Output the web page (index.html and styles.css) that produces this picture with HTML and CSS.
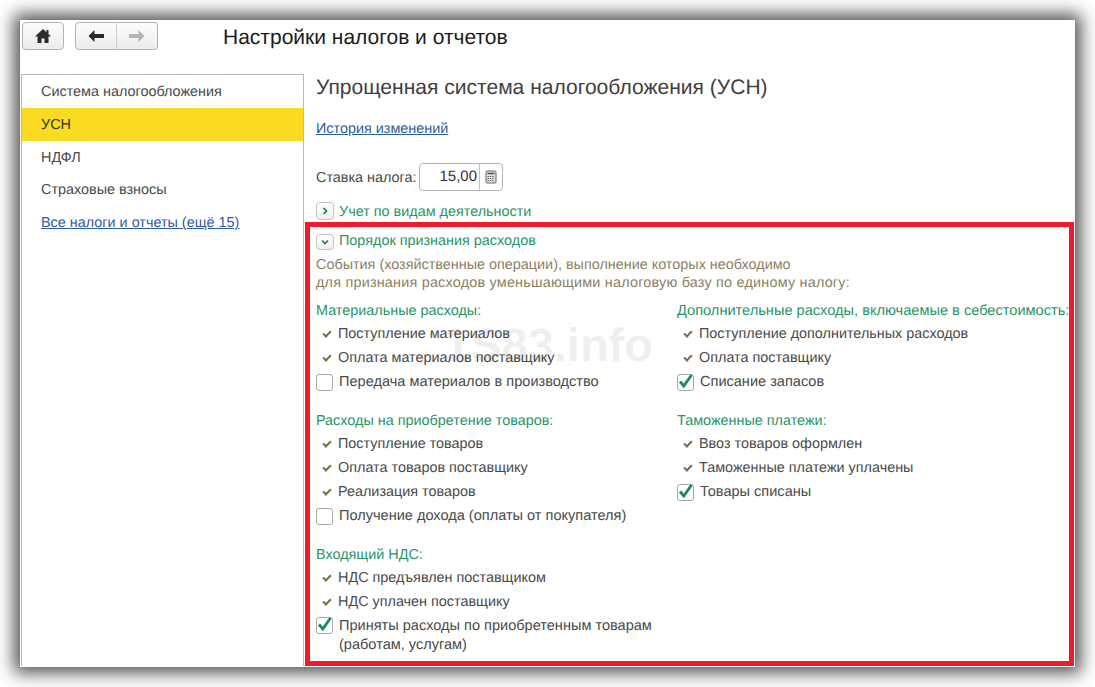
FILE: index.html
```html
<!DOCTYPE html>
<html lang="ru">
<head>
<meta charset="utf-8">
<title>Настройки налогов и отчетов</title>
<link rel="stylesheet" href="styles.css">
</head>
<body>
<div class="window">
  <header class="topbar">
    <button class="btn home" aria-label="Домой"><svg width="18" height="16" viewBox="0 0 18 16"><path d="M9 1 1 8.5h2.5V15h4v-4.5h3V15h4V8.5H17l-2.5-2.4V2h-2v2.2z" fill="#2b2b2b"/></svg></button>
    <div class="btn-group">
      <button class="btn nav" aria-label="Назад"><svg width="18" height="14" viewBox="0 0 18 14"><path d="M7.5 1 1.5 7l6 6V9H17V5H7.5z" fill="#2b2b2b"/></svg></button>
      <button class="btn nav" aria-label="Вперед"><svg width="18" height="14" viewBox="0 0 18 14"><path d="M10.5 1l6 6-6 6V9H1V5h9.5z" fill="#b5b5b5"/></svg></button>
    </div>
    <h1 class="page-title">Настройки налогов и отчетов</h1>
  </header>
  <div class="body">
    <nav class="sidebar">
      <div class="side-item">Система налогообложения</div>
      <div class="side-item active">УСН</div>
      <div class="side-item">НДФЛ</div>
      <div class="side-item">Страховые взносы</div>
      <div class="side-item"><a class="link" href="#">Все налоги и отчеты (ещё 15)</a></div>
    </nav>
    <main class="content">
      <div class="content-top">
        <h2 class="heading">Упрощенная система налогообложения (УСН)</h2>
        <a class="link history" href="#">История изменений</a>
        <div class="rate">
          <span class="rate-label">Ставка налога:</span>
          <div class="field">
            <span class="field-value">15,00</span>
            <span class="field-btn"><svg width="12" height="14" viewBox="0 0 12 14"><rect x="1" y="1" width="10" height="12" rx="1" fill="#e4e4e4" stroke="#666"/><path d="M2.5 3.5h7" stroke="#555" stroke-width="1.6"/><path d="M2.5 6.5h7M2.5 8.5h7M2.5 10.5h7" stroke="#666" stroke-dasharray="1.5 .8"/></svg></span>
          </div>
        </div>
        <div class="expander-row collapsed-row">
          <span class="expander"><svg width="8" height="8" viewBox="0 0 8 8"><path d="M2.5 1 5.5 4 2.5 7" fill="none" stroke="#1b7f56" stroke-width="1.7"/></svg></span>
          <span class="green">Учет по видам деятельности</span>
        </div>
      </div>
      <section class="highlight">
        <div class="expander-row">
          <span class="expander open"><svg width="8" height="8" viewBox="0 0 8 8"><path d="M1 2.5 4 5.5 7 2.5" fill="none" stroke="#1b7f56" stroke-width="1.7"/></svg></span>
          <span class="green">Порядок признания расходов</span>
        </div>
        <p class="desc">События (хозяйственные операции), выполнение которых необходимо<br><span class="desc-wide">для признания расходов уменьшающими налоговую базу по единому налогу:</span></p>
        <div class="columns">
          <div class="col">
            <div class="group">
              <div class="group-title">Материальные расходы:</div>
              <div class="item"><span class="tick"></span>Поступление материалов</div>
              <div class="item"><span class="tick"></span>Оплата материалов поставщику</div>
              <label class="check"><span class="box"></span>Передача материалов в производство</label>
            </div>
            <div class="group">
              <div class="group-title">Расходы на приобретение товаров:</div>
              <div class="item"><span class="tick"></span>Поступление товаров</div>
              <div class="item"><span class="tick"></span>Оплата товаров поставщику</div>
              <div class="item"><span class="tick"></span>Реализация товаров</div>
              <label class="check"><span class="box"></span>Получение дохода (оплаты от покупателя)</label>
            </div>
            <div class="group">
              <div class="group-title">Входящий НДС:</div>
              <div class="item"><span class="tick"></span>НДС предъявлен поставщиком</div>
              <div class="item"><span class="tick"></span>НДС уплачен поставщику</div>
              <label class="check multi"><span class="box on"><svg width="17" height="18" viewBox="0 0 17 18"><path d="M3 8.5 6.8 13 14.5 2" fill="none" stroke="#1b8a5a" stroke-width="2.8"/></svg></span><span>Приняты расходы по приобретенным товарам<br>(работам, услугам)</span></label>
            </div>
          </div>
          <div class="col">
            <div class="group">
              <div class="group-title nowrap">Дополнительные расходы, включаемые в себестоимость:</div>
              <div class="item"><span class="tick"></span>Поступление дополнительных расходов</div>
              <div class="item"><span class="tick"></span>Оплата поставщику</div>
              <label class="check"><span class="box on"><svg width="17" height="18" viewBox="0 0 17 18"><path d="M3 8.5 6.8 13 14.5 2" fill="none" stroke="#1b8a5a" stroke-width="2.8"/></svg></span>Списание запасов</label>
            </div>
            <div class="group">
              <div class="group-title">Таможенные платежи:</div>
              <div class="item"><span class="tick"></span>Ввоз товаров оформлен</div>
              <div class="item"><span class="tick"></span>Таможенные платежи уплачены</div>
              <label class="check"><span class="box on"><svg width="17" height="18" viewBox="0 0 17 18"><path d="M3 8.5 6.8 13 14.5 2" fill="none" stroke="#1b8a5a" stroke-width="2.8"/></svg></span>Товары списаны</label>
            </div>
          </div>
        </div>
        <div class="watermark">1S83.info</div>
      </section>
    </main>
  </div>
</div>
</body>
</html>
```

FILE: styles.css
```css
* { box-sizing: border-box; }
html, body { margin: 0; height: 100%; background: #fff; }
body {
  padding: 20px;
  font-family: "Liberation Sans", Arial, sans-serif;
  font-size: 14.4px;
  color: #4a4a4a;
  overflow: hidden;
  text-rendering: geometricPrecision;
}
.window {
  width: 1055px;
  height: 647px;
  background: #fff;
  box-shadow: 0 0 16px 6px rgba(0,0,0,.68);
  display: flex;
  flex-direction: column;
  overflow: hidden;
  border-right: 1px solid #fff;
  border-bottom: 1px solid #fff;
}
.topbar {
  height: 54px;
  flex: none;
  display: flex;
  align-items: flex-start;
  padding: 2px 0 0 2px;
}
.btn {
  border: 1px solid #b4b4b4;
  background: linear-gradient(#fdfdfd, #ececec);
  padding: 0;
  display: flex;
  align-items: center;
  justify-content: center;
  height: 28px;
}
.home { width: 42px; border-radius: 4px; }
.btn-group { display: flex; margin-left: 11px; border-radius: 4px; }
.nav { width: 42px; }
.nav:first-child { border-radius: 4px 0 0 4px; }
.nav:last-child { border-radius: 0 4px 4px 0; border-left: 1px solid #cfcfcf; margin-left: -1px; }
.page-title {
  margin: 3px 0 0 65px;
  font-size: 21px;
  font-weight: 400;
  color: #1c1c1c;
  line-height: 26px;
}
.body { flex: 1; display: flex; min-height: 0; }
.sidebar {
  width: 283px;
  flex: none;
  margin-left: 1px;
  border: 1px solid #b9b9b9;
  border-bottom: 0;
}
.side-item { height: 32.8px; line-height: 32.8px; padding: 1px 0 0 19px; }
.side-item.active { background: #fbdb22; color: #333; }
.link { color: #2f5c9c; text-decoration: underline; }
.content { flex: 1; min-width: 0; display: flex; flex-direction: column; }
.content-top { padding: 0 0 0 12px; height: 148px; }
.heading { margin: 0; padding-top: 1px; font-size: 21.05px; font-weight: 400; line-height: 26px; color: #3f3f3f; }
.history { display: inline-block; margin-top: 19px; line-height: 18px; }
.rate { display: flex; align-items: center; margin-top: 25px; height: 28px; }
.rate-label { width: 103px; padding-top: 2px; }
.field {
  width: 84px;
  height: 28px;
  border: 1px solid #b4b4b4;
  border-radius: 4px;
  display: flex;
}
.field-value { flex: 1; text-align: right; line-height: 26px; padding-right: 2px; color: #333; font-size: 15px; }
.field-btn { width: 23px; border-left: 1px solid #c4c4c4; display: flex; align-items: center; justify-content: center; }
.expander-row { display: flex; align-items: center; height: 18px; }
.collapsed-row { margin-top: 11px; }
.collapsed-row .green { padding-top: 2px; }
.expander {
  width: 18px;
  height: 18px;
  border: 1px solid #c4c4c4;
  border-radius: 4px;
  background: linear-gradient(#fff, #efefef);
  margin-right: 5px;
  display: flex;
  align-items: center;
  justify-content: center;
}
.expander.open { height: 16px; margin-top: 3px; margin-bottom: -1px; }
.expander.open + .green { padding-top: 2px; }
.green { color: #2a9469; }
.highlight {
  position: relative;
  flex: 1;
  margin-left: 1px;
  border: 5px solid #ec1c2c;
  padding: 4px 0 0 6px;
  min-height: 0;
  overflow: hidden;
}
.desc { margin: 7px 0 0; line-height: 18px; color: #8d7f62; }
.desc-wide { letter-spacing: .21px; }
.columns { display: grid; grid-template-columns: 361px 1fr; margin-top: 8px; }
.group { margin-bottom: 16px; }
.group-title { color: #2a9469; height: 22px; line-height: 22px; }
.nowrap { white-space: nowrap; font-size: 14.6px; }
.item { height: 24px; line-height: 24px; display: flex; align-items: center; color: #4a4a4a; }
.tick {
  width: 8px;
  height: 5px;
  border-left: 2px solid #7a6a4c;
  border-bottom: 2px solid #7a6a4c;
  transform: rotate(-45deg) translate(1px, -1px);
  margin: 0 7px 0 7px;
  flex: none;
}
.check { height: 24px; display: flex; align-items: center; color: #4a4a4a; font-size: 14.55px; }
.check.multi { align-items: flex-start; height: auto; line-height: 19px; padding-top: 3px; }
.box {
  width: 17px;
  height: 17px;
  border: 1px solid #a8a8a8;
  border-radius: 3px;
  margin-right: 6px;
  flex: none;
  background: #fff;
  position: relative;
}
.box svg { position: absolute; left: -1px; top: -2px; }
.watermark {
  position: absolute;
  left: 134px;
  top: 90px;
  font-size: 47px;
  line-height: 56px;
  font-weight: 700;
  color: rgba(0,0,0,.08);
  pointer-events: none;
}
```
